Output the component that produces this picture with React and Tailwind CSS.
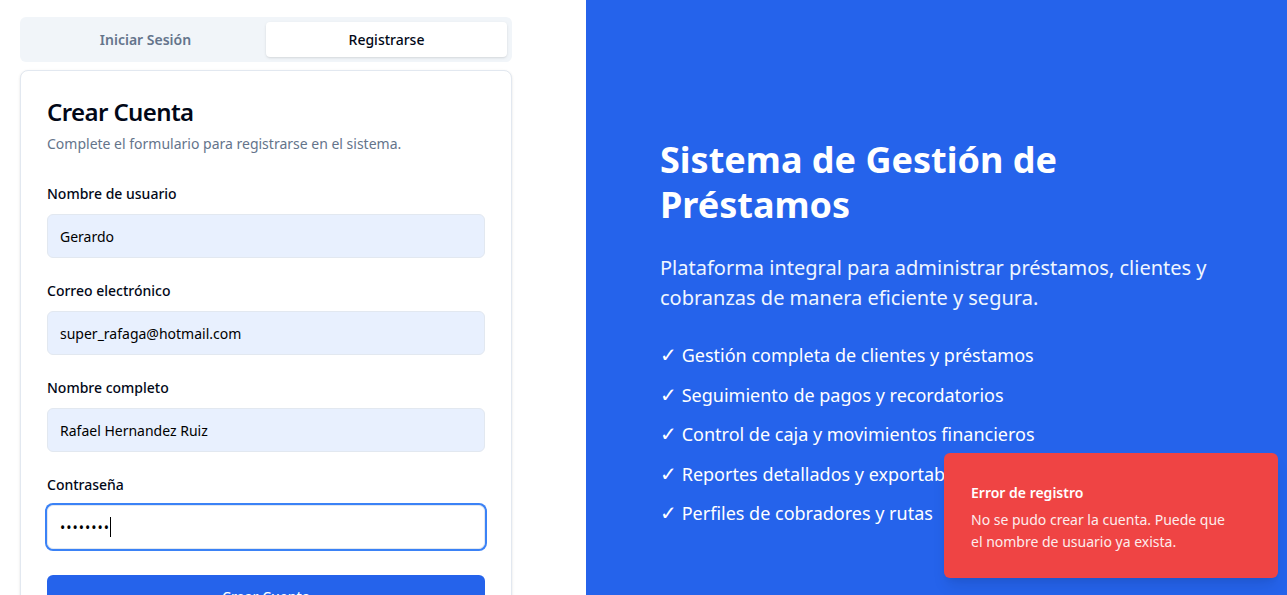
export default function App() {
  const features = [
    "Gestión completa de clientes y préstamos",
    "Seguimiento de pagos y recordatorios",
    "Control de caja y movimientos financieros",
    "Reportes detallados y exportables",
    "Perfiles de cobradores y rutas",
  ];

  const fields = [
    { label: "Nombre de usuario", value: "Gerardo" },
    { label: "Correo electrónico", value: "super_rafaga@hotmail.com" },
    { label: "Nombre completo", value: "Rafael Hernandez Ruiz" },
  ];

  return (
    <div className="relative flex h-[595px] w-full overflow-hidden bg-white font-['Noto_Sans',sans-serif] text-[#020817]">
      {/* Left: auth form */}
      <div className="w-[586px] shrink-0 pl-5 pt-[17px]">
        <div className="w-[492px]">
          <div className="grid h-[45px] grid-cols-2 rounded-md bg-[#f1f5f9] p-[5px] text-sm font-medium">
            <button className="rounded-sm font-semibold text-[#64748b]">Iniciar Sesión</button>
            <button className="rounded-sm bg-white text-[#020817] shadow-sm">Registrarse</button>
          </div>

          <div className="mt-2 rounded-lg border border-[#e2e8f0] bg-white px-[26px] pt-[25px] shadow-sm">
            <h2 className="text-2xl leading-8 font-semibold tracking-tight">Crear Cuenta</h2>
            <p className="mt-1.5 text-sm leading-5 text-[#64748b]">
              Complete el formulario para registrarse en el sistema.
            </p>

            <div className="space-y-[23px] pt-[30px]">
              {fields.map((f) => (
                <div key={f.label}>
                  <label className="block text-sm leading-5 font-medium">{f.label}</label>
                  <input
                    readOnly
                    value={f.value}
                    className="mt-[10px] h-11 w-full rounded-md border border-[#e2e8f0] bg-[#e8f0fe] px-3 text-sm text-black outline-none"
                  />
                </div>
              ))}
              <div>
                <label className="block text-sm leading-5 font-medium">Contraseña</label>
                <div className="relative mt-[10px]">
                  <input
                    readOnly
                    type="password"
                    value="12345678"
                    className="h-11 w-full rounded-md border border-[#e2e8f0] bg-white px-3 text-sm tracking-[1px] text-black outline-none ring-2 ring-[#3b82f6]"
                  />
                  <span className="absolute top-[12px] left-[63px] h-[20px] w-px bg-black" />
                </div>
              </div>
            </div>

            <button className="mt-[26px] mb-6 h-11 w-full rounded-md bg-[#2563eb] text-sm font-medium text-white">
              Crear Cuenta
            </button>
          </div>
        </div>
      </div>

      {/* Right: brand panel */}
      <div className="flex-1 bg-[#2563eb] pl-[74px] pt-[137px] text-white">
        <div className="max-w-[576px]">
          <h1 className="w-[420px] text-4xl leading-[45px] font-bold">
            Sistema de Gestión de Préstamos
          </h1>
          <p className="mt-[26px] w-[570px] text-xl leading-[30px] text-[#eff6ff]">
            Plataforma integral para administrar préstamos, clientes y cobranzas de manera eficiente y segura.
          </p>
          <ul className="mt-[28px] space-y-[11.5px] text-lg leading-7">
            {features.map((f) => (
              <li key={f}>
                <span className="text-xl">✓</span> {f}
              </li>
            ))}
          </ul>
        </div>
      </div>

      {/* Toast */}
      <div className="absolute right-[9px] bottom-[17px] w-[334px] rounded-md bg-[#ef4444] pt-[30px] pr-[40px] pb-[25px] pl-[27px] text-white shadow-lg">
        <div className="text-sm leading-5 font-semibold">Error de registro</div>
        <div className="mt-[6px] text-sm leading-[22px] opacity-90">
          No se pudo crear la cuenta. Puede que el nombre de usuario ya exista.
        </div>
      </div>
    </div>
  );
}
